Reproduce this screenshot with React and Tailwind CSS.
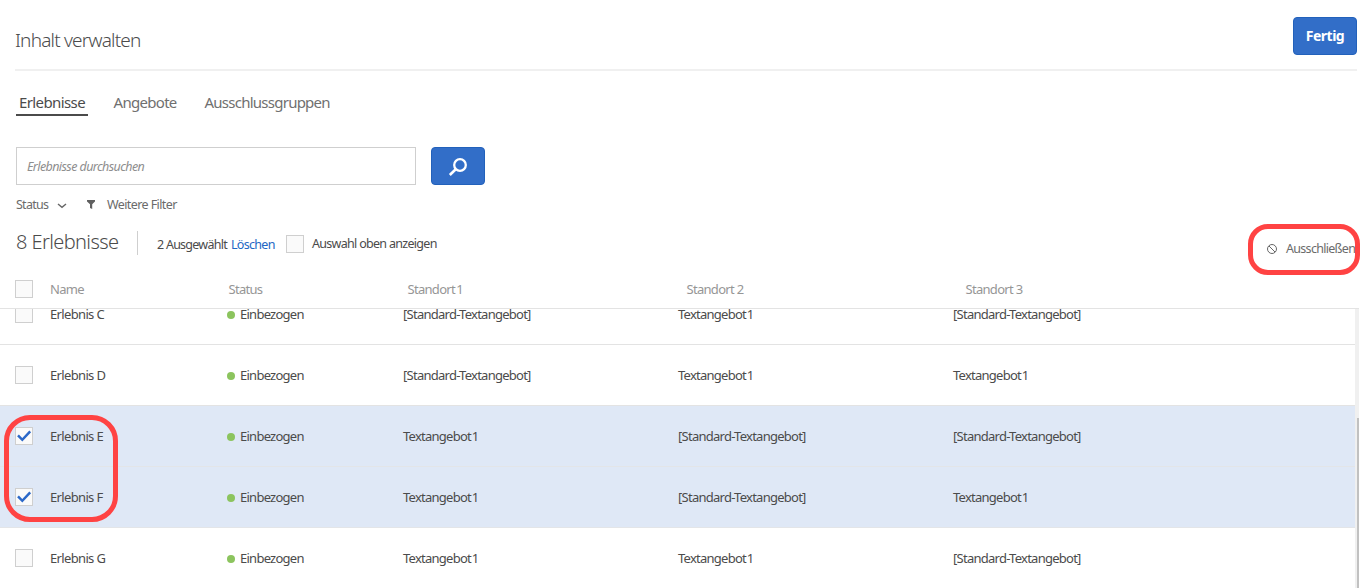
import React from "react";

const rows = [
  { name: "Erlebnis C", on: false, cells: ["[Standard-Textangebot]", "Textangebot 1", "[Standard-Textangebot]"] },
  { name: "Erlebnis D", on: false, cells: ["[Standard-Textangebot]", "Textangebot 1", "Textangebot 1"] },
  { name: "Erlebnis E", on: true, cells: ["Textangebot 1", "[Standard-Textangebot]", "[Standard-Textangebot]"] },
  { name: "Erlebnis F", on: true, cells: ["Textangebot 1", "[Standard-Textangebot]", "Textangebot 1"] },
  { name: "Erlebnis G", on: false, cells: ["Textangebot 1", "Textangebot 1", "[Standard-Textangebot]"] },
];

function Checkbox({ checked }) {
  return (
    <span className="flex h-[18px] w-[18px] shrink-0 items-center justify-center border border-[#cfcfcf] bg-[#fafafa]">
      {checked && (
        <svg className="shrink-0" width="16" height="16" viewBox="0 0 16 16" fill="none">
          <path d="M2 7.4 6.3 11.8 14.2 3.4" stroke="#2b68c8" strokeWidth="2.5" />
        </svg>
      )}
    </span>
  );
}

export default function App() {
  return (
    <div className="relative flex h-[588px] w-[1360px] flex-col overflow-hidden bg-white font-['Noto_Sans',sans-serif] text-[13px] tracking-[-0.7px] whitespace-nowrap text-[#4b4b4b]">
      <header className="ml-[15px] mr-[3px] flex h-[71px] shrink-0 items-center justify-between border-b-2 border-[#f0f0f0]">
        <h1 className="mt-[12px] text-[19px] font-light tracking-[-0.8px]">Inhalt verwalten</h1>
        <button className="mt-[2px] h-[38px] w-16 rounded-[4px] border border-[#2261bb] bg-[#326ec8] text-[14px] font-bold tracking-[-0.5px] text-white">Fertig</button>
      </header>

      <nav className="ml-4 mt-[19px] flex h-[26px] shrink-0 text-[15px] leading-[25px] text-[#707070]">
        <span className="w-[72px] border-b-2 border-[#4b4b4b] pl-[3px] tracking-[-0.6px] text-[#4b4b4b]">Erlebnisse</span>
        <span className="ml-[25.5px] w-[91px]">Angebote</span>
        <span className="tracking-[-0.75px]">Ausschlussgruppen</span>
      </nav>

      <div className="ml-4 mt-[31px] flex h-[38px] shrink-0 gap-[15px]">
        <div className="flex w-[400px] items-center border border-[#cfcfcf] pl-[10px] pt-0.5 text-[12.5px] italic tracking-[-0.58px] text-[#8e8e8e]">Erlebnisse durchsuchen</div>
        <button className="flex w-[54px] items-center justify-center rounded-[4px] border border-[#2261bb] bg-[#326ec8] pt-0.5">
          <svg width="20" height="20" viewBox="0 0 20 20" fill="none" stroke="white">
            <circle cx="12" cy="8" r="5.8" strokeWidth="2.3" />
            <path d="M8 12 1.8 18" strokeWidth="2.6" />
          </svg>
        </button>
      </div>

      <div className="ml-4 mt-[10px] flex h-5 shrink-0 items-center text-[12.5px] tracking-[-0.6px] text-[#6b6b6b]">
        <span className="w-[41px] tracking-[-0.75px]">Status</span>
        <svg className="mt-[2px]" width="10" height="6" viewBox="0 0 10 6" fill="none"><path d="M1 1 5 4.4 9 1" stroke="#666" strokeWidth="1.4" /></svg>
        <svg className="mb-0.5 ml-5" width="8" height="9" viewBox="0 0 8 9" fill="#606060"><path d="M0 0H8V1.5L5.2 4.2V9L3 8V4.2L0 1.5Z" /></svg>
        <span className="ml-3">Weitere Filter</span>
      </div>

      <div className="ml-4 mt-[13px] flex h-[32px] shrink-0 items-center text-[12.5px]">
        <h2 className="mb-1 w-[121px] text-[20px] font-light tracking-[-0.6px]">8 Erlebnisse</h2>
        <span className="mb-0.5 h-6 w-px bg-[#cfcfcf]" />
        <span className="ml-[19px] mt-0.5 w-[74px] tracking-[-0.75px]">2 Ausgewählt</span>
        <span className="mt-0.5 w-[55px] text-[#2266c4]">Löschen</span>
        <Checkbox />
        <span className="ml-2">Auswahl oben anzeigen</span>
        <span className="ml-auto mt-[10px] flex w-[93px] items-center text-[#6b6b6b]">
          <svg width="10" height="10" viewBox="0 0 10 10" fill="none" stroke="#666"><circle cx="5" cy="5" r="4.5" /><path d="M2 2 8 8" /></svg>
          <span className="ml-[9px]">Ausschließen</span>
        </span>
      </div>

      <div className="flex h-[49px] w-[1359px] shrink-0 items-center border-b border-[#e3e3e3] pt-[10px] pl-[15px] text-[#969696]">
        <Checkbox />
        <div className="flex pt-0.5">
          <span className="ml-[17px] w-[178.5px]">Name</span>
          <span className="w-[179px]">Status</span>
          <span className="w-[279px] [word-spacing:-1.5px]">Standort 1</span>
          <span className="w-[279px]">Standort 2</span>
          <span>Standort 3</span>
        </div>
      </div>

      <main className="flex h-[279px] w-[1359px] shrink-0 overflow-hidden">
        <div className="-mb-px flex w-[1355px] flex-col justify-end">
          {rows.map((r) => (
            <div key={r.name} className={`flex h-[61px] shrink-0 items-center border-b pl-[15px] ${r.on ? "border-[#e3e5e8] bg-[#dfe8f6]" : "border-[#e3e3e3]"}`}>
              <Checkbox checked={r.on} />
              <div className="flex items-center pt-0.5 tracking-[-0.74px] [word-spacing:-2px]">
                <span className="ml-[17px] w-[177px] tracking-[-0.65px] [word-spacing:0px]">{r.name}</span>
                <span className="h-2 w-2 rounded-full bg-[#8cc45e]" />
                <span className="ml-[5px] w-[163px]">Einbezogen</span>
                <span className="w-[275px]">{r.cells[0]}</span>
                <span className="w-[275px]">{r.cells[1]}</span>
                <span>{r.cells[2]}</span>
              </div>
            </div>
          ))}
        </div>
        <div className="flex w-1 flex-col items-end justify-end bg-[#f0f0f0]">
          <span className="h-[170px] w-[2px] bg-[#c1c1c1]" />
        </div>
      </main>

      <div className="absolute left-[1248px] top-[224px] h-[51px] w-[112px] rounded-[20px] border-[5px] border-[#ff4343]" />
      <div className="absolute left-[4px] top-[415px] h-[107px] w-[114px] rounded-[26px] border-[5px] border-[#ff4343]" />
    </div>
  );
}
